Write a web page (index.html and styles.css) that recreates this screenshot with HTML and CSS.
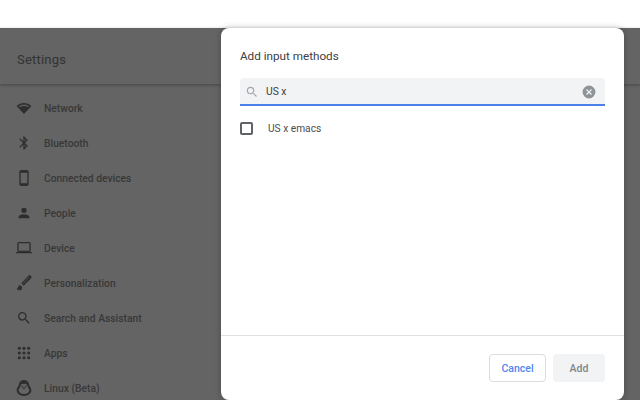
FILE: index.html
```html
<!DOCTYPE html>
<html lang="en">
  <head>
    <meta charset="UTF-8" />
    <title>Settings</title>
    <link rel="stylesheet" href="styles.css">
  </head>
  <body>
    <div class="topbar"></div>
    <div class="settings">
      <div class="header">Settings</div>
      <ul class="nav">
        <li>
          <svg viewBox="0 0 24 24"><path fill-rule="evenodd" d="M12 21 .8 9C4 6 7.800 4.500 12 4.500S20 6 23.200 9zM4.500 9.200l1.300 1.400C7.500 9.500 9.600 9 12 9s4.500.5 6.200 1.600l1.300-1.400C17.400 7.800 14.800 7 12 7s-5.400.8-7.500 2.200z"/></svg>
          <span>Network</span>
        </li>
        <li>
          <svg viewBox="0 0 24 24"><path d="M17.700 7.700 12 2h-1v7.600L6.400 5 5 6.400 10.600 12 5 17.600 6.400 19l4.600-4.600V22h1l5.700-5.700-4.300-4.300zM13 5.800l1.900 1.900L13 9.600zm1.900 10.500L13 18.200v-3.800z"/></svg>
          <span>Bluetooth</span>
        </li>
        <li>
          <svg viewBox="0 0 24 24"><path fill-rule="evenodd" d="M8 0h8a3 3 0 0 1 3 3v18a3 3 0 0 1-3 3H8a3 3 0 0 1-3-3V3a3 3 0 0 1 3-3zM7 4v16h10V4z"/></svg>
          <span>Connected devices</span>
        </li>
        <li>
          <svg viewBox="0 0 24 24"><path d="M12 12a4 4 0 1 0 0-8 4 4 0 0 0 0 8zm0 2c-2.700 0-8 1.300-8 4v2h16v-2c0-2.700-5.300-4-8-4z"/></svg>
          <span>People</span>
        </li>
        <li>
          <svg viewBox="0 0 24 24"><path fill-rule="evenodd" d="M4 18a2 2 0 0 1-2-2V5a2 2 0 0 1 2-2h16a2 2 0 0 1 2 2v11a2 2 0 0 1-2 2h4v2H0v-2zM4 5v11h16V5z"/></svg>
          <span>Device</span>
        </li>
        <li>
          <svg viewBox="0 0 24 24"><path fill-rule="evenodd" d="M6 15.500a3 3 0 0 0-3 3c0 1.200-1 1.800-2 2 1 1.300 2.500 2.500 4 2.500a4 4 0 0 0 4-4 3.500 3.500 0 0 0-3-3.500zM18.500 1 8 12.500l3.500 3.500L22.500 5a2.500 2.500 0 0 0 0-3.500l-.5-.5a2.500 2.500 0 0 0-3.500 0zm1 2.500L11.300 13l-.5-.5 8.200-9.500z"/></svg>
          <span>Personalization</span>
        </li>
        <li>
          <svg viewBox="0 0 24 24"><path d="M15.500 14h-.79l-.28-.27A6.470 6.470 0 0 0 16 9.500 6.500 6.500 0 1 0 9.500 16c1.610 0 3.090-.59 4.230-1.570l.27.28v.79l5 4.990L20.490 19l-4.990-5zm-6 0C7.010 14 5 11.990 5 9.500S7.010 5 9.500 5 14 7.010 14 9.500 11.990 14 9.500 14z"/></svg>
          <span>Search and Assistant</span>
        </li>
        <li>
          <svg viewBox="0 0 24 24"><circle cx="5" cy="5" r="2.300"/><circle cx="12" cy="5" r="2.300"/><circle cx="19" cy="5" r="2.300"/><circle cx="5" cy="12" r="2.300"/><circle cx="12" cy="12" r="2.300"/><circle cx="19" cy="12" r="2.300"/><circle cx="5" cy="19" r="2.300"/><circle cx="12" cy="19" r="2.300"/><circle cx="19" cy="19" r="2.300"/></svg>
          <span>Apps</span>
        </li>
        <li>
          <svg viewBox="0 0 24 24"><path fill-rule="evenodd" d="M12 0c4 0 7 2.500 7.500 6 .2 1.500.8 2.700 1.800 4 1 1.500 1.700 3.300 1.700 5.500C23 20.500 18 24 12 24S1 20.500 1 15.500c0-2.200.7-4 1.700-5.500 1-1.300 1.600-2.500 1.800-4C5 2.500 8 0 12 0zm0 6.500C10.500 5 7.800 5.500 7.300 8c-.3 1.800-1 3-1.800 4-.8 1-1.500 2.200-1.500 3.500C4 19 7.500 21 12 21s8-2 8-5.500c0-1.300-.7-2.500-1.500-3.500-.8-1-1.500-2.200-1.800-4-.5-2.500-3.200-3-4.700-1.500zM9.500 8.500a1.200 1.200 0 1 0 0 2.400 1.200 1.200 0 0 0 0-2.400zm5 0a1.200 1.200 0 1 0 0 2.400 1.200 1.200 0 0 0 0-2.400zM12 11l-2 1.200 2 1.800 2-1.800z"/></svg>
          <span>Linux (Beta)</span>
        </li>
      </ul>
    </div>
    <div class="dialog">
      <h2 class="title">Add input methods</h2>
      <div class="searchbox">
        <svg class="search-icon" viewBox="0 0 24 24"><path d="M15.500 14h-.79l-.28-.27A6.470 6.470 0 0 0 16 9.500 6.500 6.500 0 1 0 9.500 16c1.610 0 3.090-.59 4.230-1.570l.27.28v.79l5 4.990L20.490 19l-4.990-5zm-6 0C7.010 14 5 11.990 5 9.500S7.010 5 9.500 5 14 7.010 14 9.500 11.990 14 9.500 14z"/></svg>
        <span class="query">US x</span>
        <svg class="clear-icon" viewBox="0 0 24 24"><path d="M12 1a11 11 0 1 0 0 22 11 11 0 0 0 0-22zm5 14.500L15.500 17 12 13.500 8.500 17 7 15.500l3.500-3.500L7 8.500 8.500 7l3.500 3.500L15.500 7 17 8.500 13.500 12z"/></svg>
      </div>
      <label class="option">
        <span class="checkbox"></span>
        <span>US x emacs</span>
      </label>
      <div class="footer">
        <button class="btn cancel">Cancel</button>
        <button class="btn add">Add</button>
      </div>
    </div>
  </body>
</html>
```

FILE: styles.css
```css
* {
  margin: 0;
  padding: 0;
  box-sizing: border-box;
}
html, body {
  height: 400px;
  overflow: hidden;
}
body {
  background: #fff;
  font-family: Roboto, "Liberation Sans", sans-serif;
  position: relative;
}
.topbar {
  height: 28px;
  background: #fff;
}
.settings {
  height: 372px;
  background: #646464;
}
.header {
  height: 56px;
  padding: 6px 0 0 17px;
  display: flex;
  align-items: center;
  font-size: 13px;
  letter-spacing: 0.2px;
  color: #333;
  box-shadow: 0 1px 3px rgba(0, 0, 0, 0.3);
}
.nav {
  list-style: none;
  padding-top: 6px;
}
.nav li {
  height: 35px;
  display: flex;
  align-items: center;
  gap: 12px;
  padding: 1px 0 0 16px;
  font-size: 10.300px;
  font-weight: 500;
  color: #383838;
}
.nav svg {
  width: 16px;
  height: 16px;
  fill: #2e2e2e;
  flex: none;
}
/* dialog lies over the settings page */
.dialog {
  position: absolute;
  left: 221px;
  top: 28px;
  width: 403px;
  height: 372px;
  background: #fff;
  border-radius: 8px;
  display: flex;
  flex-direction: column;
  padding: 0 19px;
  box-shadow: 0 0 6px rgba(0, 0, 0, 0.25);
}
.title {
  font-size: 11.700px;
  font-weight: 400;
  color: #3c4043;
  line-height: 16px;
  padding-top: 20px;
  height: 50px;
}
.searchbox {
  height: 28px;
  background: #f1f3f4;
  border-bottom: 2px solid #4a80e8;
  border-radius: 4px 4px 0 0;
  display: flex;
  align-items: center;
  font-size: 10.300px;
  color: #3c4043;
  padding: 1px 9px 0 5px;
}
.search-icon {
  width: 14px;
  height: 14px;
  fill: #a5a9ae;
  margin-right: 7px;
}
.query {
  flex: 1;
}
.clear-icon {
  width: 14px;
  height: 14px;
  fill: #8f9499;
}
.option {
  display: flex;
  align-items: center;
  height: 45px;
  gap: 15px;
  font-size: 10.200px;
  color: #4a4d50;
}
.checkbox {
  width: 13px;
  height: 13px;
  border: 2px solid #5f6368;
  border-radius: 2px;
}
.footer {
  margin: auto -19px 0;
  height: 65px;
  border-top: 1px solid #e0e0e0;
  display: flex;
  justify-content: flex-end;
  align-items: center;
  gap: 7px;
  padding-right: 19px;
}
.btn {
  width: 57px;
  height: 28px;
  border-radius: 4px;
  font: 500 10.500px Roboto, "Liberation Sans", sans-serif;
}
.cancel {
  background: #fff;
  border: 1px solid #dadce0;
  color: #5286ec;
}
.add {
  width: 52px;
  background: #f1f3f4;
  border: none;
  color: #80868b;
}
```
